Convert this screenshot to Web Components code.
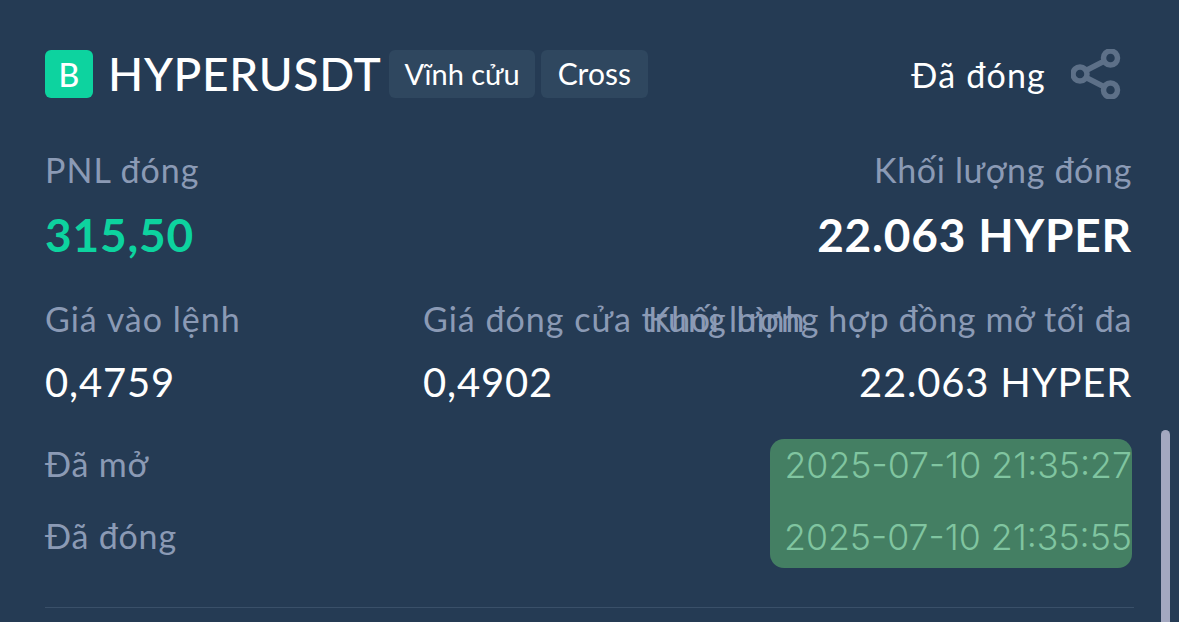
<!DOCTYPE html>
<html lang="vi">
<head>
<meta charset="utf-8">
<style>
html, body { margin: 0; height: 100%; }
body { background: #253b54; overflow: hidden; font-family: "Lato", "Noto Sans", sans-serif; }
</style>
</head>
<body>
<order-card></order-card>
<scroll-thumb></scroll-thumb>
<script>
function define(name, styles, markup) {
    customElements.define(name, class extends HTMLElement {
        constructor() {
            super();
            const shadow = this.attachShadow({ mode: 'open' });
            shadow.innerHTML = `<style>${styles}</style>${markup(this)}`;
        }
    });
}

define('side-badge', `
    :host { display: flex; width: 48px; height: 48px; border-radius: 6px; background: #0dd39f;
        align-items: center; justify-content: center; color: #fff; font-size: 32px; font-weight: 500; }
`, () => `<slot></slot>`);

define('tag-chip', `
    :host { display: flex; height: 46px; padding: 0 15px 2px; border-radius: 6px; background: #2f475f;
        align-items: center; color: #fff; font-size: 29px; }
    :host(:last-child) { padding: 0 17px 2px; font-size: 30px; }
`, () => `<slot></slot>`);

define('share-icon', `
    :host { display: block; width: 50px; height: 50px; }
    svg { display: block; }
`, () => `<svg width="50" height="50" viewBox="0 0 50 50" fill="none" stroke="#5d7088" stroke-width="5.500">
    <circle cx="9" cy="25" r="7"/><circle cx="39.500" cy="9" r="7"/><circle cx="39.500" cy="41" r="7"/>
    <path d="M15 21.500 33.500 12M15 28.500 33.500 38"/>
</svg>`);

define('stat-item', `
    :host { display: flex; flex-direction: column; white-space: nowrap; min-width: 0; }
    :host([end]) { align-items: flex-end; }
    .label { color: #8b9ab5; font-size: 34px; letter-spacing: 1px; line-height: 40px; position: relative; top: 1px; }
    :host([end]) .label { letter-spacing: 0.650px; }
    .value { color: #fff; font-size: 40px; letter-spacing: 0.8px; line-height: 48px; margin-top: 20px; }
    :host([big]) .value { font-size: 46px; font-weight: 700; letter-spacing: 0.8px; line-height: 54px; margin-top: 19px; }
    :host([gain]) .value { color: #0dd39f; }
`, el => `<div class="label">${el.getAttribute('label')}</div><div class="value">${el.getAttribute('value')}</div>`);

define('order-card', `
    :host { display: block; padding: 50px 47px 0 45px; }
    header { display: flex; align-items: center; height: 48px; }
    h1 { margin: 0 8px 0 15px; color: #fff; font-size: 46px; font-weight: 500; letter-spacing: 0.7px; line-height: 48px; }
    .chips { display: flex; gap: 6px; }
    .status { margin-left: auto; color: #fff; font-size: 34px; letter-spacing: 1.200px; }
    share-icon { margin-left: 25px; margin-right: 11px; }
    .top { display: flex; justify-content: space-between; margin-top: 51px; }
    .mid { display: grid; grid-template-columns: 378px minmax(0, 1fr) auto; margin-top: 36px; }
    .times { display: flex; justify-content: space-between; margin-top: 33px; }
    .names { display: flex; flex-direction: column; gap: 32px; padding-top: 5px; color: #8b9ab5; font-size: 34px; letter-spacing: 0.8px; line-height: 40px; }
    .marked { display: flex; flex-direction: column; gap: 32px; box-sizing: border-box; width: 362px; height: 129px;
        padding-top: 6px; border-radius: 14px; background: #447f63; color: #80c5a0;
        align-items: flex-end; font-family: "Inter", sans-serif; font-size: 35.700px; font-weight: 300; line-height: 40px; white-space: nowrap; }
    hr { height: 1px; margin: 39px -2px 0 0; border: 0; background: #3a5069; }
`, () => `
<header>
    <side-badge>B</side-badge>
    <h1>HYPERUSDT</h1>
    <div class="chips"><tag-chip>Vĩnh cửu</tag-chip><tag-chip>Cross</tag-chip></div>
    <div class="status">Đã đóng</div>
    <share-icon></share-icon>
</header>
<div class="top">
    <stat-item big gain label="PNL đóng" value="315,50"></stat-item>
    <stat-item big end label="Khối lượng đóng" value="22.063 HYPER"></stat-item>
</div>
<div class="mid">
    <stat-item label="Giá vào lệnh" value="0,4759"></stat-item>
    <stat-item label="Giá đóng cửa trung bình" value="0,4902"></stat-item>
    <stat-item end label="Khối lượng hợp đồng mở tối đa" value="22.063 HYPER"></stat-item>
</div>
<div class="times">
    <div class="names"><span>Đã mở</span><span>Đã đóng</span></div>
    <div class="marked"><span>2025-07-10 21:35:27</span><span>2025-07-10 21:35:55</span></div>
</div>
<hr>
`);

// overlay scrollbar thumb, sits over the page
define('scroll-thumb', `
    :host { position: fixed; left: 1161px; top: 430px; bottom: -20px; width: 9px; border-radius: 5px; background: #a3a8c0; }
`, () => ``);
</script>
</body>
</html>
